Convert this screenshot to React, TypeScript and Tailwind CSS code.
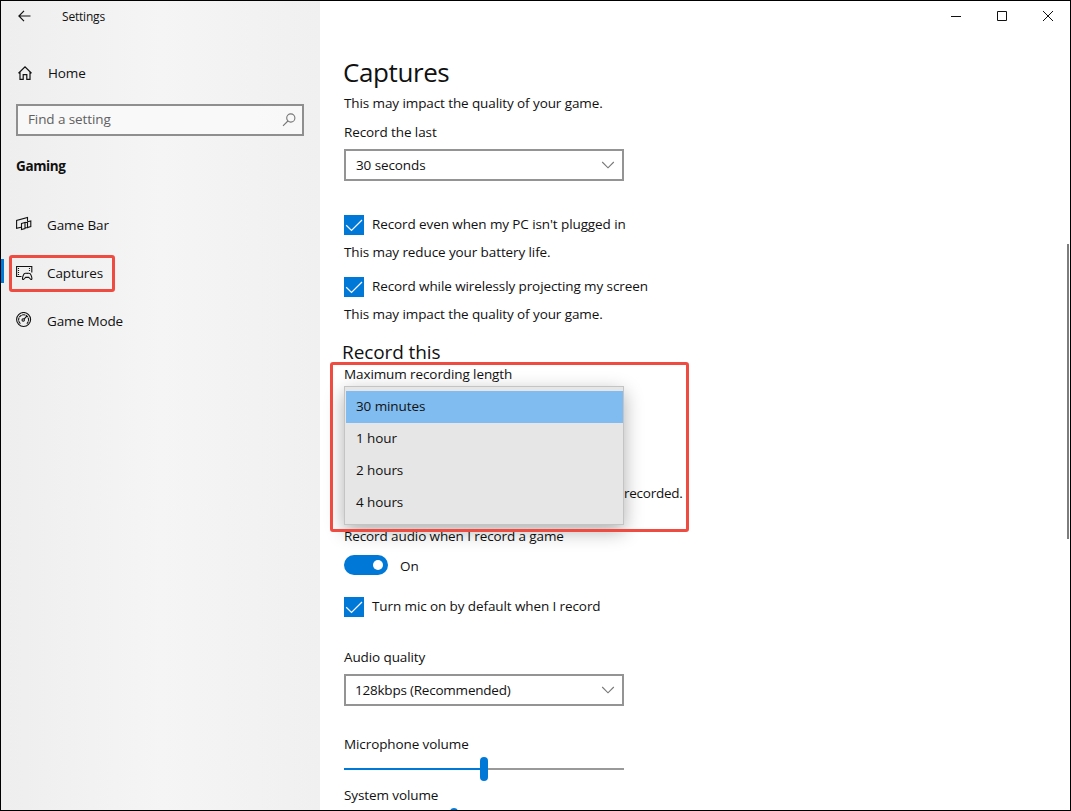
import React from "react";

const lengths = ["30 minutes", "1 hour", "2 hours", "4 hours"];

const GameBarIcon = () => (
  <svg width="16" height="16" viewBox="0 0 16 16" fill="none" stroke="#111" strokeWidth="1.1">
    <path d="M11.5 5V1.5L.6 4.5v7.7l4.4-1" />
    <path d="M5.5 7.5l3.5-1v6l-3.5 1zM9 6.5h2.5v5.2H9M11.5 5.7l3.3-.8v5.7l-3.3.9z" />
  </svg>
);

const CapturesIcon = () => (
  <svg width="17" height="16" viewBox="0 0 17 16" fill="none" stroke="#111" strokeWidth="1.1">
    <path d="M5.5 11.5H.6v-10h15.2v6" />
    <path d="M2.5 3v7.5M13.5 3v4" strokeDasharray="1 1" />
    <path d="M8.3 8.6c1-.8 1.8-.2 2.9-.2s1.900-.6 2.900.2c1 .9 2.200 4.600 1.700 5.600-.7 1.100-2.100-.9-3-1.800h-3.200c-.9.900-2.300 2.900-3 1.800-.5-1 .7-4.700 1.700-5.600z" />
  </svg>
);

const GameModeIcon = () => (
  <svg width="16" height="16" viewBox="0 0 16 16" fill="none" stroke="#111" strokeWidth="1.1">
    <circle cx="7.6" cy="7.5" r="7" />
    <path d="M4.4 11.6a5 5 0 1 1 6.4 0" strokeDasharray="3 .5" />
    <circle cx="7.2" cy="8" r="1.2" />
    <path d="M8 7.2l3-3.200" />
  </svg>
);

const menu = [
  { label: "Game Bar", icon: <GameBarIcon /> },
  { label: "Captures", icon: <CapturesIcon /> },
  { label: "Game Mode", icon: <GameModeIcon /> },
];

const Checkbox = ({ label }: { label: string }) => (
  <label className="flex h-5 items-center">
    <span className="flex size-5 items-center justify-center bg-[#0078d7]">
      <svg width="20" height="20" viewBox="0 0 20 20" fill="none" stroke="white" strokeWidth="1.2">
        <path d="M2.2 10.3l5.3 5.2L18 5" />
      </svg>
    </span>
    <span className="-mt-0.5 ml-2">{label}</span>
  </label>
);

const Select = ({ value }: { value: string }) => (
  <div className="flex h-8 w-[280px] items-center justify-between border-2 border-[#949494] bg-white pr-[7px] pl-2.5">
    <span className={value.length > 12 ? "-ml-px tracking-[-0.22px]" : ""}>{value}</span>
    <svg width="14" height="8" viewBox="0 0 14 8" fill="none" stroke="#777" strokeWidth="1.1">
      <path d="M1.2 1L7 6.8 12.8 1" />
    </svg>
  </div>
);

const Sidebar = () => (
  <aside className="w-[319px] shrink-0 bg-linear-to-r from-[#eeeeee] via-[#f5f5f5] to-[#f0f0f0]">
    <div className="flex h-[31px] items-center pl-[17px]">
      <svg width="13" height="12" viewBox="0 0 13 12" fill="none" stroke="#111" strokeWidth="1.2" className="-mt-0.5">
        <path d="M6 .8L.9 6 6 11.2M1 6h11.5" />
      </svg>
      <span className="ml-[31px] text-[12px] tracking-[-0.2px]">Settings</span>
    </div>
    <div className="mt-[31px] flex h-5 items-center pl-[17px]">
      <svg width="14" height="14" viewBox="0 0 14 14" fill="none" stroke="#111" strokeWidth="1.2">
        <path d="M.5 7.2L7 .9l6.5 6.3M2 6v7.4h3.2V8.600h3.600v4.800H12V6" />
      </svg>
      <span className="ml-4">Home</span>
    </div>
    <div className="mt-[21px] ml-[15px] flex h-8 w-72 items-center justify-between border-2 border-[#8f8f8f] bg-[#fafafa]/80 pr-1.5 pl-2.5 text-[#606060]">
      <span className="-mt-0.5">Find a setting</span>
      <svg width="14" height="14" viewBox="0 0 14 14" fill="none" stroke="#777" strokeWidth="1.1">
        <circle cx="8.8" cy="5" r="4.1" />
        <path d="M5.9 8L1 12.9" />
      </svg>
    </div>
    <h2 className="mt-5 ml-[15px] h-5 font-bold tracking-[-0.4px]">Gaming</h2>
    <nav className="mt-[25px]">
      {menu.map((item) => (
        <div key={item.label} className="flex h-12 items-center">
          <span className={item.label === "Captures" ? "-mt-1 h-6 w-[3px] bg-[#0078d7]" : "h-6 w-[3px]"} />
          <div
            className={
              item.label === "Captures"
                ? "ml-[5px] flex h-[37px] w-[106px] items-center rounded-[3px] border-3 border-[#f04b40] pl-1"
                : "ml-2 flex h-[37px] items-center pl-1"
            }
          >
            <span className={item.label === "Captures" ? "w-[17px] shrink-0" : "-mt-0.5 w-[17px] shrink-0"}>
              {item.icon}
            </span>
            <span className="ml-3.5 whitespace-nowrap">{item.label}</span>
          </div>
        </div>
      ))}
    </nav>
  </aside>
);

const Content = () => (
  <main className="relative flex-1 overflow-hidden bg-white pl-6">
    {/* Window buttons */}
    <div className="flex h-[30px] items-center justify-end gap-9 pr-[17px]">
      <svg width="10" height="10" viewBox="0 0 10 10" stroke="#111">
        <path d="M0 5.5h10" />
      </svg>
      <svg width="10" height="10" viewBox="0 0 10 10" fill="none" stroke="#111">
        <path d="M.5.5h9v9h-9z" />
      </svg>
      <svg width="10" height="10" viewBox="0 0 10 10" stroke="#111">
        <path d="M0 0l10 10M10 0L0 10" />
      </svg>
    </div>

    <h1 className="mt-[21px] -ml-px h-[41px] text-[26px] leading-10 tracking-[-0.4px]">Captures</h1>
    <p>This may impact the quality of your game.</p>
    <p className="mt-[9px] mb-[7px]">Record the last</p>
    <Select value="30 seconds" />
    <div className="mt-[34px]">
      <Checkbox label="Record even when my PC isn't plugged in" />
      <p className="mt-[7px] mb-[15px]">This may reduce your battery life.</p>
      <Checkbox label="Record while wirelessly projecting my screen" />
      <p className="mt-[7px]">This may impact the quality of your game.</p>
    </div>

    <h2 className="mt-4 -ml-0.5 h-6 text-[19px] leading-6">Record this</h2>
    <div className="relative h-[162px]">
      <p>Maximum recording length</p>
      <p className="pt-[99px] pl-[280px] tracking-[-0.25px]">recorded.</p>
      <ul className="absolute top-[22px] left-0 h-[139px] w-[280px] border border-[#c4c4c4] bg-[#e6e6e6] pt-1 pl-px shadow-[0_6px_18px_rgba(0,0,0,0.32)]">
        {lengths.map((length, i) => (
          <li
            key={length}
            className={i === 0 ? "flex h-8 items-center bg-[#80bcef] pb-0.5" : "flex h-8 items-center pb-0.5"}
          >
            <span className="pl-2.5">{length}</span>
          </li>
        ))}
      </ul>
      <div className="absolute -top-0.5 -left-3.5 z-10 h-[170px] w-[359px] rounded-[3px] border-3 border-[#f04b40]" />
    </div>

    <p>Record audio when I record a game</p>
    <div className="mt-[9px] flex h-5 items-center">
      <span className="flex h-5 w-11 items-center justify-end rounded-full bg-[#0078d7] pr-[5px]">
        <span className="size-2.5 rounded-full bg-white" />
      </span>
      <span className="mt-0.5 ml-3">On</span>
    </div>
    <div className="mt-[22px]">
      <Checkbox label="Turn mic on by default when I record" />
    </div>
    <p className="mt-[30px] mb-[7px]">Audio quality</p>
    <Select value="128kbps (Recommended)" />
    <p className="mt-7">Microphone volume</p>
    <div className="mt-[3px] flex h-6 w-[280px] items-center">
      <span className="h-0.5 flex-1 bg-[#0078d7]" />
      <span className="h-6 w-2 rounded-full bg-[#0078d7]" />
      <span className="h-0.5 flex-1 bg-[#999]" />
    </div>
    <p className="mt-1">System volume</p>
    <div className="mt-[3px] ml-[106px] h-6 w-2 rounded-full bg-[#0078d7]" />

    {/* Scrollbar */}
    <div className="absolute top-[243px] right-px h-[295px] w-0.5 bg-[#7d7d7d]" />
  </main>
);

const App = () => {
  return (
    <div className="flex h-[811px] w-[1071px] overflow-hidden border border-black font-['Open_Sans','Noto_Sans',sans-serif] text-[13.5px] leading-5 tracking-[-0.1px] text-[#111]">
      <Sidebar />
      <Content />
    </div>
  );
};

export default App;
